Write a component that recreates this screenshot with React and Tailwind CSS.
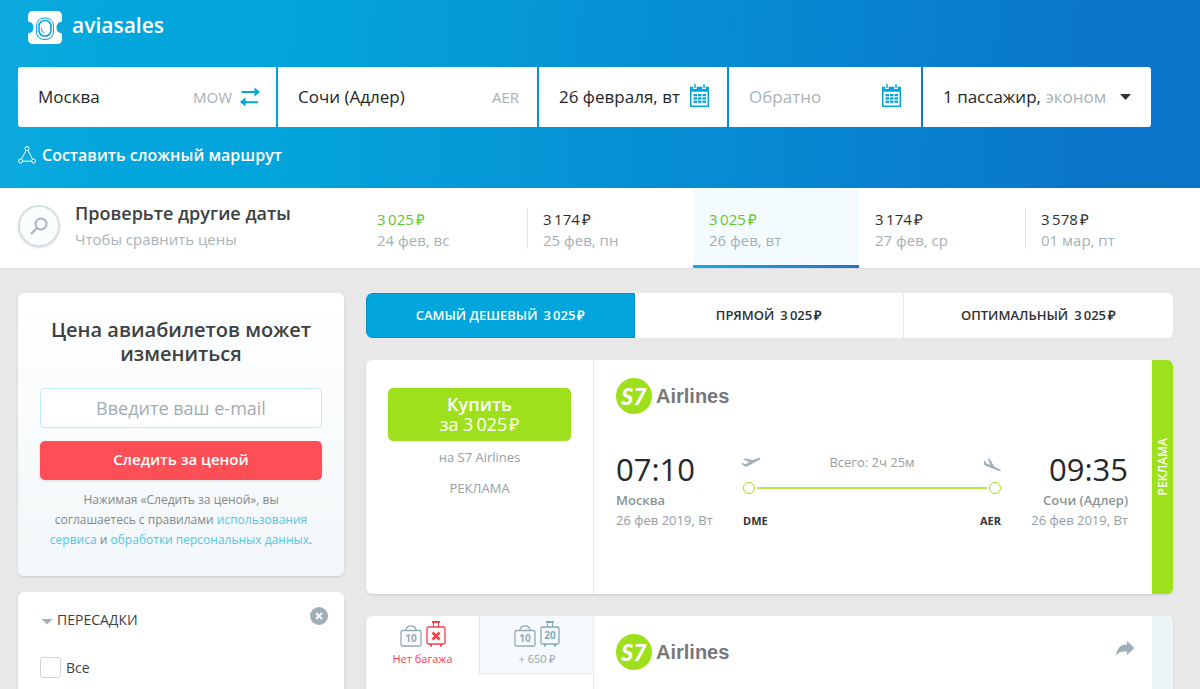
const DATES = [
  { price: "3\u2009025", date: "24 фев, вс", cheap: true },
  { price: "3\u2009174", date: "25 фев, пн", divider: true },
  { price: "3\u2009025", date: "26 фев, вт", cheap: true, active: true },
  { price: "3\u2009174", date: "27 фев, ср" },
  { price: "3\u2009578", date: "01 мар, пт", divider: true },
];

const TABS = [
  { label: "Самый дешевый", price: "3\u2009025", active: true },
  { label: "Прямой", price: "3\u2009025" },
  { label: "Оптимальный", price: "3\u2009025" },
];

function Price({ value }) {
  return (
    <>
      {value}
      <span className="ml-[2px]">₽</span>
    </>
  );
}

function LogoIcon() {
  return (
    <svg width="34" height="33" viewBox="0 0 34 33" fill="none" aria-hidden="true">
      <path
        d="M4.500 0h25A4.500 4.500 0 0 1 34 4.500V10.500c-5 1-5.500 4-5.500 6s.5 5 5.500 6v6a4.500 4.500 0 0 1-4.500 4.500h-25A4.500 4.500 0 0 1 0 28.500v-6c5-1 5.500-4 5.500-6s-.5-5-5.500-6v-6A4.500 4.500 0 0 1 4.500 0z"
        fill="#fff"
      />
      <rect x="8" y="7" width="18" height="21.500" rx="8" fill="#fff" stroke="#fff" strokeWidth="3" />
      <rect x="8.500" y="7" width="17" height="21.500" rx="7.500" fill="#fff" stroke="#04a5dc" />
      <rect x="11" y="9.500" width="12" height="15.500" rx="5.500" stroke="#04a5dc" strokeWidth="1.600" />
      <path d="M13.500 17v1.500a3 3 0 0 0 3 3" stroke="#04a5dc" />
    </svg>
  );
}

function SwapIcon() {
  return (
    <svg width="20" height="20" viewBox="0 0 20 20" aria-hidden="true">
      <path d="M1.500 4h13V0.500L20 5l-5.500 4.500V6h-13z" fill="#02a5dc" />
      <path d="M18 14.200H5.500V10.500L0 15l5.500 4.500V16.200H18z" fill="#02a5dc" />
    </svg>
  );
}

function CalendarIcon() {
  const cells = [];
  for (let row = 0; row < 3; row += 1) {
    for (let col = 0; col < 3; col += 1) {
      cells.push(
        <rect key={`${row}-${col}`} x={3.5 + col * 4.5} y={10 + row * 3.3} width="3.500" height="2.300" fill="#02a5dc" />
      );
    }
  }
  return (
    <svg width="19" height="23" viewBox="0 0 19 23" aria-hidden="true">
      <path d="M.75 3.500h17.500v18.700H.75z" fill="#fff" stroke="#02a5dc" strokeWidth="1.500" />
      <path d="M0 3.500h19v4.300H0z" fill="#02a5dc" />
      <path d="M3.300 0h3.400v5H3.300zM12.300 0h3.400v5h-3.400z" fill="#fff" />
      <path d="M4.300 0h1.400v4H4.300zM13.300 0h1.400v4h-1.400z" fill="#02a5dc" />
      {cells}
    </svg>
  );
}

function RouteIcon() {
  return (
    <svg width="18" height="18" viewBox="0 0 18 18" fill="none" stroke="#fff" aria-hidden="true">
      <circle cx="9" cy="2.500" r="2" />
      <circle cx="2.500" cy="15" r="2" />
      <circle cx="15.500" cy="15" r="2" />
      <path d="M8 4.500 3.500 13M10 4.500 14.500 13M4.500 15.200h9" />
    </svg>
  );
}

function TakeoffIcon() {
  return (
    <svg width="20" height="11" viewBox="0 0 20 11" fill="#a0b0b9" className="-ml-[2px]" aria-hidden="true">
      <path d="M0 6.300 1.800 6 4 7.200l4.500-2L2.200 2.200l2.300-.8L12 3l5.500-2c2-.6 2.500 1 1 1.800l-12 6.500c-1.200.6-2.200.4-3-.1z" />
    </svg>
  );
}

function LandingIcon() {
  return (
    <svg width="18" height="14" viewBox="0 0 18 14" fill="#a0b0b9" className="mt-[5px]" aria-hidden="true">
      <path d="M.8 2.500 2 3l1.200 2.200L7 7 4.800.3l2 .6 4.400 7.700 5.800 2.900c1.500.8.8 2.100-.8 1.500L3 8C1.500 7.400 1 6.800 1 5.500z" />
    </svg>
  );
}

function S7Logo() {
  return (
    <div className="flex items-center gap-1">
      <span className="flex size-9 items-center justify-center rounded-full bg-[#9ee01b] font-[Lato] text-[23px] leading-9 font-black text-white italic">
        S7
      </span>
      <span className="font-['Liberation_Sans'] text-xl leading-8 font-bold text-[#77787b]">Airlines</span>
    </div>
  );
}

function BagIcon({ weight }) {
  return (
    <svg width="22" height="22" viewBox="0 0 22 22" fill="none" stroke="#93aab4" aria-hidden="true">
      <rect x="1" y="5.500" width="20" height="15.500" rx="1.500" strokeWidth="1.300" />
      <path d="M6 5c.5-5.500 9.500-5.500 10 0" strokeWidth="1.300" />
      <text x="11" y="17" textAnchor="middle" fontSize="10" fontWeight="700" fill="#93aab4" stroke="none">
        {weight}
      </text>
    </svg>
  );
}

function SuitcaseIcon({ weight }) {
  const color = weight ? "#86a9b9" : "#ff3b47";
  return (
    <svg width="20" height="26" viewBox="0 0 20 26" fill="none" stroke={color} aria-hidden="true">
      <rect x="1" y="6" width="18" height="17" rx="1.500" strokeWidth="1.300" />
      <path d="M6 1h8M5 25.500V23M15 25.500V23" strokeWidth="2" />
      <path d="M7.500 1v5M12.500 1v5" />
      {weight ? (
        <text x="10" y="18" textAnchor="middle" fontSize="10" fontWeight="700" fill={color} stroke="none">
          {weight}
        </text>
      ) : (
        <path d="m6.500 11.500 7 7m0-7-7 7" strokeWidth="2.600" />
      )}
    </svg>
  );
}

function SearchForm() {
  const cell = "flex h-[60px] min-w-0 items-center bg-white pl-5";
  const input = "w-full min-w-0 bg-transparent text-[17px] text-[#242628] outline-none placeholder:text-[#a9b3b8]";

  return (
    <form className="mr-[31px] grid grid-cols-[258fr_259fr_188fr_192fr_228fr] gap-[2px] overflow-hidden rounded-[3px]">
      <div className={`${cell} gap-2 pr-4`}>
        <input aria-label="Город вылета" className={input} defaultValue="Москва" />
        <span className="text-[15px] text-[#a9b0b4]">MOW</span>
        <button type="button" aria-label="Поменять местами" className="shrink-0">
          <SwapIcon />
        </button>
      </div>
      <div className={`${cell} pr-[18px]`}>
        <input aria-label="Город прибытия" className={input} defaultValue="Сочи (Адлер)" />
        <span className="text-[15px] text-[#a9b0b4]">AER</span>
      </div>
      <div className={`${cell} pr-[18px]`}>
        <input aria-label="Туда" className={input} defaultValue="26 февраля, вт" />
        <span className="shrink-0 pb-1">
          <CalendarIcon />
        </span>
      </div>
      <div className={`${cell} pr-5`}>
        <input aria-label="Обратно" className={input} placeholder="Обратно" />
        <span className="shrink-0 pb-1">
          <CalendarIcon />
        </span>
      </div>
      <button type="button" className={`${cell} justify-between pr-5 text-[17px] whitespace-nowrap text-[#242628]`}>
        <span>
          1 пассажир, <span className="text-[#a9b3b8]">эконом</span>
        </span>
        <svg width="11" height="6" viewBox="0 0 11 6" fill="#333" aria-hidden="true">
          <path d="M0 0h11L5.500 6z" />
        </svg>
      </button>
    </form>
  );
}

function DatesBar() {
  return (
    <section className="flex h-[81px] border-b border-[#dedede] bg-white pr-[9px] pl-[18px]">
      <div className="flex w-[343px] shrink-0 items-center gap-[15px] pb-1">
        <span className="flex size-[42px] items-center justify-center rounded-full border-2 border-[#d5dee2] bg-[#fafdfe] shadow-sm">
          <svg width="18" height="18" viewBox="0 0 18 18" fill="none" stroke="#a5b3ba" aria-hidden="true">
            <circle cx="11" cy="7" r="5.500" strokeWidth="2" />
            <path d="M7 11 1 17" strokeWidth="2.200" />
          </svg>
        </span>
        <div>
          <h2 className="text-lg leading-[26px] font-semibold text-[#3c4144]">Проверьте другие даты</h2>
          <p className="text-[15px] leading-[26px] text-[#a9b3b8]">Чтобы сравнить цены</p>
        </div>
      </div>
      <div className="grid flex-1 grid-cols-5">
        {DATES.map((item) => (
          <button
            key={item.date}
            type="button"
            className={`relative flex flex-col px-4 pt-[21px] text-left text-[15px] leading-[21px] ${
              item.active ? "bg-[#f3fbfe]" : ""
            }`}
          >
            {item.divider && <span className="absolute top-5 left-0 h-[41px] w-px bg-[#e2e6e8]" />}
            <span className={item.cheap ? "text-[#62c62b]" : "text-[#2e3133]"}>
              <Price value={item.price} />
            </span>
            <span className="text-[#a5b0b5]">{item.date}</span>
            {item.active && (
              <span className="absolute inset-x-0 bottom-0 h-[3px] bg-linear-to-r from-[#12aee0] to-[#256fc8]" />
            )}
          </button>
        ))}
      </div>
    </section>
  );
}

function Sidebar() {
  return (
    <aside className="flex w-[326px] shrink-0 flex-col gap-4 text-center">
      <form className="rounded-md bg-linear-to-b from-white to-[#f2f7f9] px-[22px] pt-[25px] pb-[26px] shadow-sm">
        <h2 className="text-xl leading-6 font-semibold text-[#3d4143]">Цена авиабилетов может измениться</h2>
        <input
          type="email"
          aria-label="E-mail"
          placeholder="Введите ваш e-mail"
          className="mt-[22px] h-10 w-full rounded-[5px] border border-[#bfe9f5] bg-white text-center text-lg outline-none placeholder:text-[#a2acb1]"
        />
        <button
          type="button"
          className="mt-[13px] h-[39px] w-full rounded-[5px] bg-[#ff4f56] pb-[2px] text-[15px] font-semibold text-white shadow-sm"
        >
          Следить за ценой
        </button>
        <p className="mt-[10px] text-xs leading-5 text-[#81888b]">
          Нажимая «Следить за ценой», вы
          <br />
          соглашаетесь с правилами{" "}
          <a href="#terms" className="text-[#55c4e5]">
            использования
            <br />
            сервиса
          </a>{" "}
          и{" "}
          <a href="#privacy" className="text-[#55c4e5]">
            обработки персональных данных
          </a>
          .
        </p>
      </form>

      <section className="rounded-md bg-white px-[22px] pt-[15px] pb-10 shadow-sm">
        <div className="flex justify-between">
          <button type="button" className="flex items-center gap-1 pt-[3px] text-sm font-medium text-[#3d4143] uppercase">
            <svg width="13" height="6" viewBox="0 0 13 6" fill="#9fb0b8" className="mt-1" aria-hidden="true">
              <path d="M1.500 0h11L7 5.500z" />
            </svg>
            Пересадки
          </button>
          <button
            type="button"
            aria-label="Сбросить"
            className="mr-[-6px] flex size-[18px] items-center justify-center rounded-full bg-[#9fafb7]"
          >
            <svg width="8" height="8" viewBox="0 0 8 8" stroke="#fff" strokeWidth="1.800" aria-hidden="true">
              <path d="m1 1 6 6m0-6L1 7" />
            </svg>
          </button>
        </div>
        <label className="mt-[27px] flex items-center gap-[5px] text-sm text-[#3d4143]">
          <input type="checkbox" className="size-[21px] appearance-none rounded-[3px] border border-[#d2d5d7] bg-white" />
          Все
        </label>
      </section>
    </aside>
  );
}

function SortTabs() {
  return (
    <div className="grid h-[45px] grid-cols-3 overflow-hidden rounded-md bg-white">
      {TABS.map((tab) => (
        <button
          key={tab.label}
          type="button"
          className={`text-[13px] font-semibold uppercase ${
            tab.active
              ? "rounded-l-md border border-[#0590c4] bg-[#02a5dc] text-white"
              : "border-r border-[#e8e8e8] text-[#2e3133] last:border-r-0"
          }`}
        >
          <span className="mr-[6px]">{tab.label}</span>
          <Price value={tab.price} />
        </button>
      ))}
    </div>
  );
}

function AdTicket() {
  return (
    <article className="flex h-[234px] overflow-hidden rounded-md bg-white shadow-sm">
      <div className="w-[228px] shrink-0 border-r border-[#e6eaec] px-[22px] pt-7 text-center text-[13px] text-[#93a0a6]">
        <button
          type="button"
          className="h-[53px] w-full rounded-[5px] bg-[#9ee01b] pb-px text-lg leading-5 text-white"
        >
          <span className="block font-semibold">Купить</span>
          <span className="block">
            за <Price value={"3\u2009025"} />
          </span>
        </button>
        <p className="mt-[6px] leading-5">на S7 Airlines</p>
        <p className="mt-[11px] leading-5">РЕКЛАМА</p>
      </div>

      <div className="min-w-0 flex-1 pt-[18px] pr-6 pl-[22px]">
        <S7Logo />
        <div className="mt-[37px] flex text-[13px] leading-5 text-[#959ea2]">
          <div className="w-[127px]">
            <p className="text-[31px] leading-9 text-[#26282a]">07:10</p>
            <p className="mt-[3px] font-semibold text-[#899398]">Москва</p>
            <p>26 фев 2019, Вт</p>
          </div>
          <div className="flex-1">
            <div className="flex h-[22px] items-center justify-between">
              <TakeoffIcon />
              <span>Всего: 2ч 25м</span>
              <LandingIcon />
            </div>
            <div className="flex items-center gap-[2px] pt-[9px]">
              <span className="size-3 rounded-full border border-[#9ee01b]" />
              <span className="h-[2px] flex-1 bg-[#b3e74c]" />
              <span className="size-3 rounded-full border border-[#9ee01b]" />
            </div>
            <div className="flex justify-between pt-[17px] text-[11px] font-bold text-[#303436]">
              <span>DME</span>
              <span>AER</span>
            </div>
          </div>
          <div className="w-[127px] text-right">
            <p className="text-[31px] leading-9 text-[#26282a]">09:35</p>
            <p className="mt-[3px] font-semibold text-[#899398]">Сочи (Адлер)</p>
            <p>26 фев 2019, Вт</p>
          </div>
        </div>
      </div>

      <div className="flex w-[21px] shrink-0 items-center justify-center bg-[#9ee01b]">
        <span className="mb-5 rotate-180 text-xs leading-4 font-semibold text-white [writing-mode:vertical-rl]">
          РЕКЛАМА
        </span>
      </div>
    </article>
  );
}

function BaggageTicket() {
  return (
    <article className="flex h-[234px] shrink-0 overflow-hidden rounded-md bg-white shadow-sm">
      <div className="flex w-[228px] shrink-0 items-start border-r border-[#e6eaec] text-[11px] leading-4">
        <button type="button" className="flex h-[58px] flex-1 flex-col items-center pt-[5px] text-[#ff3b47]">
          <span className="flex h-[26px] items-end gap-1">
            <BagIcon weight="10" />
            <SuitcaseIcon />
          </span>
          <span className="mt-1">Нет багажа</span>
        </button>
        <button
          type="button"
          className="flex h-[58px] flex-1 flex-col items-center border-b border-l border-[#dfe7ea] bg-[#f6fafc] pt-[5px] text-[#93a0a6]"
        >
          <span className="flex h-[26px] items-end gap-1">
            <BagIcon weight="10" />
            <SuitcaseIcon weight="20" />
          </span>
          <span className="mt-1">
            + <Price value="650" />
          </span>
        </button>
      </div>
      <div className="flex flex-1 items-start justify-between pt-[18px] pr-[17px] pl-[22px]">
        <S7Logo />
        <button type="button" aria-label="Поделиться" className="mt-[7px]">
          <svg width="19" height="15" viewBox="0 0 19 15" fill="#9fafb7" aria-hidden="true">
            <path d="M11 0v3.500C4 3.500.8 8 0 14.500 2.500 11 6 10 11 10.500V14l7.500-7z" />
          </svg>
        </button>
      </div>
      <div className="w-[21px] shrink-0 bg-[#ebf4f6]" />
    </article>
  );
}

export default function App() {
  return (
    <div className="h-screen overflow-hidden bg-[#e8e8e8] font-['Open_Sans',sans-serif]">
      <header className="bg-[linear-gradient(95deg,#0eaade_0%,#02a6dc_10%,#02a6dc_22%,#0599d7_40%,#0786d0_68%,#0a76ca_90%,#0b75ca_100%)] px-[18px] pt-[11px] pb-[21px]">
        <a href="#home" className="ml-[10px] flex w-fit items-center gap-[10px] text-white">
          <LogoIcon />
          <span className="pb-[5px] text-[21px] leading-7 font-semibold">aviasales</span>
        </a>
        <div className="mt-[23px]">
          <SearchForm />
        </div>
        <a href="#multi" className="mt-4 flex w-fit items-center gap-[6px] text-base leading-6 font-semibold text-white">
          <RouteIcon />
          Составить сложный маршрут
        </a>
      </header>
      <DatesBar />
      <main className="flex gap-[22px] pt-6 pr-[27px] pl-[18px]">
        <Sidebar />
        <div className="flex min-w-0 flex-1 flex-col gap-[22px]">
          <SortTabs />
          <AdTicket />
          <BaggageTicket />
        </div>
      </main>
    </div>
  );
}
